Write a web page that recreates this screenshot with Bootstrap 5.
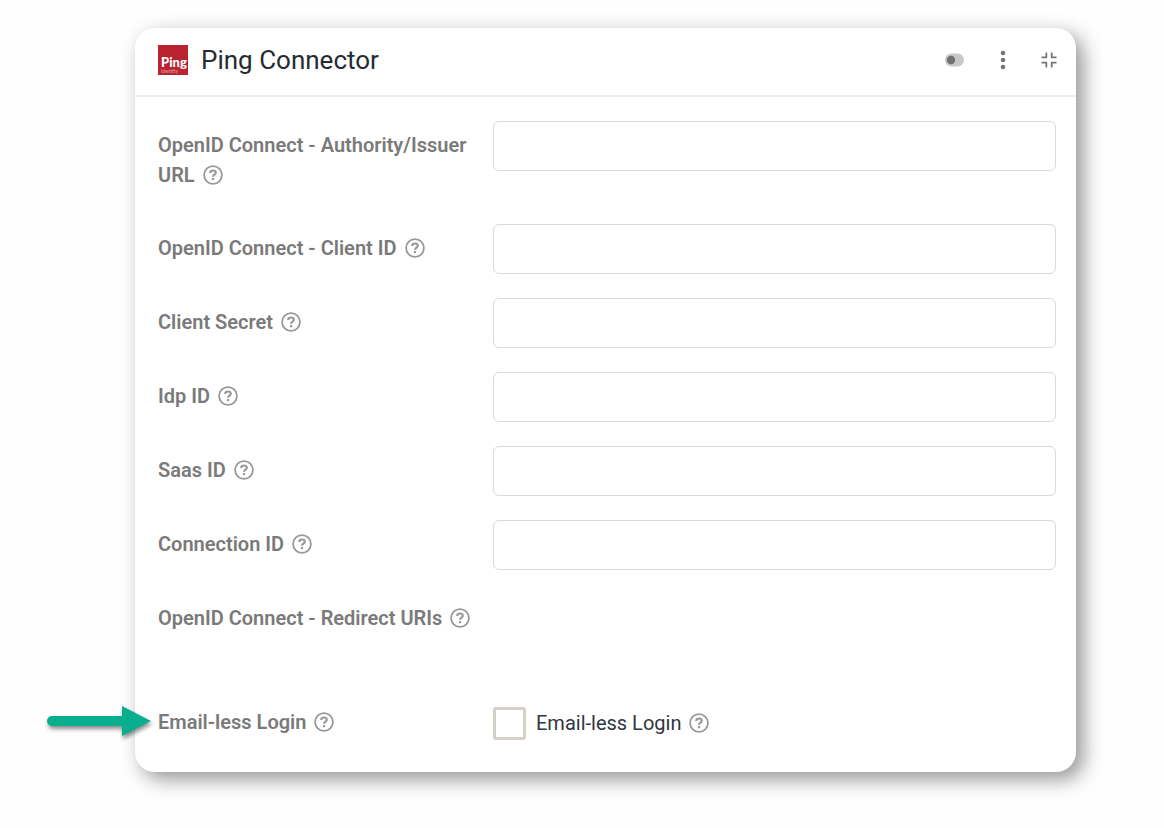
<!DOCTYPE html>
<html lang="en">
<head>
<meta charset="utf-8">
<meta name="viewport" content="width=device-width, initial-scale=1">
<title>Ping Connector</title>
<link href="https://cdn.jsdelivr.net/npm/bootstrap@5.3.0/dist/css/bootstrap.min.css" rel="stylesheet">
<style>
  body { font-family: Roboto, "Liberation Sans", sans-serif; font-size: 20px; line-height: 30px; color: #30363d; background: #fefefe; }
  .page { padding: 28px 88px 56px 135px; }
  .panel { border: 0; border-radius: 20px; background: #fff; box-shadow: 7px 7px 20px rgba(0, 0, 0, .42); }
  .panel-head { padding: 0 20px 4px 23px; height: 69px; border-bottom: 2px solid #eee; }
  .panel-title { font-size: 26px; line-height: 32px; font-weight: 400; margin: 0 0 0 13px; color: #262b31; }
  .tool { border: 0; padding: 0; background: none; display: flex; color: #767676; }
  .tools { gap: 32px; }
  .fields { display: grid; row-gap: 24px; padding: 24px 20px 24px 23px; }
  .field { display: grid; grid-template-columns: 325px 1fr; column-gap: 10px; position: relative; }
  .field-label { padding: 9px 0 10px; color: #7a7a7a; font-weight: 600; font-size: 20px; }
  .field label { display: inline; }
  .help { color: #999; border: 0; background: none; padding: 0; margin-left: 3px; display: inline-flex; vertical-align: -3px; }
  .field .form-control { height: 50px; border: 1px solid #d8dadd; border-radius: 6px; font-size: 20px; }
  .tall { min-height: 80px; }
  .check { gap: 10px; height: 50px; }
  .check .form-check-input { width: 33px; height: 33px; margin: 0; border: 3px solid #d5d1c9; border-radius: 3px; }
  .pointer-arrow { position: absolute; right: calc(100% + 7px); top: 7px; filter: drop-shadow(1px 3px 2px rgba(0, 0, 0, .45)); overflow: visible; }
</style>
<script src="https://cdn.jsdelivr.net/npm/bootstrap@5.3.0/dist/js/bootstrap.bundle.min.js"></script>
</head>
<body>
<svg class="d-none" aria-hidden="true">
  <symbol id="q" viewBox="0 0 20 20">
    <circle cx="10" cy="10" r="8.9" fill="none" stroke="currentColor" stroke-width="1.8"/>
    <path d="M7.2 8.100C7.2 6.400 8.300 5.500 10 5.500s2.800.9 2.800 2.300c0 1.900-2.800 1.900-2.800 4" fill="none" stroke="currentColor" stroke-width="2.200"/>
    <rect x="8.900" y="13" width="2.200" height="2.200" fill="currentColor"/>
  </symbol>
</svg>
<main class="page">
  <section class="card panel">
    <header class="panel-head d-flex align-items-center">
      <svg width="30" height="30" viewBox="0 0 30 30" role="img" aria-label="Ping Identity">
        <rect width="30" height="30" fill="#b8232f"/>
        <text x="3" y="22" font-family="Lato" font-weight="900" font-size="13" fill="#fff">Ping</text>
        <text x="3" y="28" font-family="Lato" font-size="5" fill="#e3a0a5">Identity</text>
      </svg>
      <h1 class="panel-title">Ping Connector</h1>
      <div class="tools d-flex align-items-center ms-auto">
        <button class="tool" type="button" aria-label="Toggle">
          <svg width="20" height="16" viewBox="0 0 20 16"><rect x="1" y="1.500" width="19" height="13" rx="6.500" fill="#c8c8c8"/><circle cx="7" cy="8" r="4.200" fill="#707070"/></svg>
        </button>
        <button class="tool" type="button" aria-label="More">
          <svg width="14" height="20" viewBox="0 0 14 20" fill="currentColor"><circle cx="7" cy="3" r="2.300"/><circle cx="7" cy="10" r="2.300"/><circle cx="7" cy="17" r="2.300"/></svg>
        </button>
        <button class="tool" type="button" aria-label="Collapse">
          <svg width="14" height="16" viewBox="1 0 14 16" overflow="visible" fill="none" stroke="currentColor" stroke-width="1.800"><path d="M.5 5.300H5.300V.5M10.700 .5V5.300H15.500M.5 10.700H5.300V15.500M10.700 15.500V10.700H15.500"/></svg>
        </button>
      </div>
    </header>
    <form class="fields">
      <div class="field">
        <div class="field-label"><label for="issuer">OpenID Connect - Authority/Issuer URL</label> <button class="help" type="button" aria-label="Help"><svg width="20" height="20"><use href="#q"/></svg></button></div>
        <input class="form-control" id="issuer" type="text">
      </div>
      <div class="field">
        <div class="field-label"><label for="client">OpenID Connect - Client ID</label> <button class="help" type="button" aria-label="Help"><svg width="20" height="20"><use href="#q"/></svg></button></div>
        <input class="form-control" id="client" type="text">
      </div>
      <div class="field">
        <div class="field-label"><label for="secret">Client Secret</label> <button class="help" type="button" aria-label="Help"><svg width="20" height="20"><use href="#q"/></svg></button></div>
        <input class="form-control" id="secret" type="text">
      </div>
      <div class="field">
        <div class="field-label"><label for="idp">Idp ID</label> <button class="help" type="button" aria-label="Help"><svg width="20" height="20"><use href="#q"/></svg></button></div>
        <input class="form-control" id="idp" type="text">
      </div>
      <div class="field">
        <div class="field-label"><label for="saas">Saas ID</label> <button class="help" type="button" aria-label="Help"><svg width="20" height="20"><use href="#q"/></svg></button></div>
        <input class="form-control" id="saas" type="text">
      </div>
      <div class="field">
        <div class="field-label"><label for="connection">Connection ID</label> <button class="help" type="button" aria-label="Help"><svg width="20" height="20"><use href="#q"/></svg></button></div>
        <input class="form-control" id="connection" type="text">
      </div>
      <div class="field tall">
        <div class="field-label">OpenID Connect - Redirect URIs <button class="help" type="button" aria-label="Help"><svg width="20" height="20"><use href="#q"/></svg></button></div>
      </div>
      <div class="field">
        <svg class="pointer-arrow" width="106" height="32" viewBox="0 0 106 32" aria-hidden="true"><path d="M7 11H77V1L106 16L77 31V21H7A5 5 0 0 1 7 11Z" fill="#08ae8e"/></svg>
        <div class="field-label">Email-less Login <button class="help" type="button" aria-label="Help"><svg width="20" height="20"><use href="#q"/></svg></button></div>
        <div class="check d-flex align-items-center">
          <input class="form-check-input" id="emailless" type="checkbox">
          <div><label for="emailless">Email-less Login</label> <button class="help" type="button" aria-label="Help"><svg width="20" height="20"><use href="#q"/></svg></button></div>
        </div>
      </div>
    </form>
  </section>
</main>
</body>
</html>
